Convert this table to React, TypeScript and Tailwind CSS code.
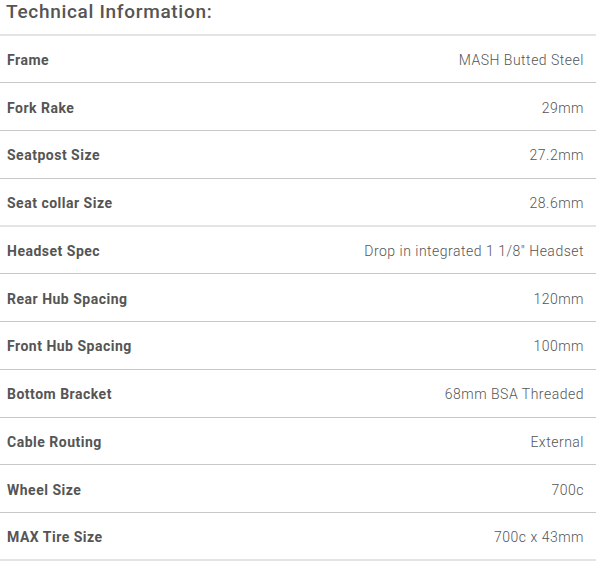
const SPECS: Array<{ label: string; value: string; heavy?: boolean }> = [
  { label: "Frame",            value: "MASH Butted Steel" },
  { label: "Fork Rake",        value: "29mm" },
  { label: "Seatpost Size",    value: "27.2mm" },
  { label: "Seat collar Size", value: "28.6mm", heavy: true },
  { label: "Headset Spec",     value: "Drop in integrated 1 1/8\" Headset" },
  { label: "Rear Hub Spacing", value: "120mm" },
  { label: "Front Hub Spacing", value: "100mm" },
  { label: "Bottom Bracket",   value: "68mm BSA Threaded" },
  { label: "Cable Routing",    value: "External" },
  { label: "Wheel Size",       value: "700c" },
  { label: "MAX Tire Size",    value: "700c x 43mm", heavy: true },
];

export default function App() {
  return (
    <div className="h-[561px] w-[596px] overflow-hidden bg-white font-['Roboto','Liberation_Sans',sans-serif] text-[#555]">
      <h2 className="h-[33.5px] pl-[6px] pt-[1px] text-[19px] font-medium leading-[22px] tracking-[0.7px] text-[#555]">
        Technical Information:
      </h2>

      <div className="border-t-2 border-[#e4e4e4]">
        {SPECS.map((row) => (
          <div
            key={row.label}
            className={`flex h-[47.75px] items-center justify-between pl-[7px] pr-[12px] pt-[3px] ${
              row.heavy ? "border-b-2 border-[#e4e4e4]" : "border-b border-[#c8c8c8]"
            }`}
          >
            <span className="text-[14px] font-bold tracking-[0.5px] text-[#555]">{row.label}</span>
            <span className="text-[14px] font-light tracking-[0.5px] text-[#555]">{row.value}</span>
          </div>
        ))}
      </div>
    </div>
  );
}
